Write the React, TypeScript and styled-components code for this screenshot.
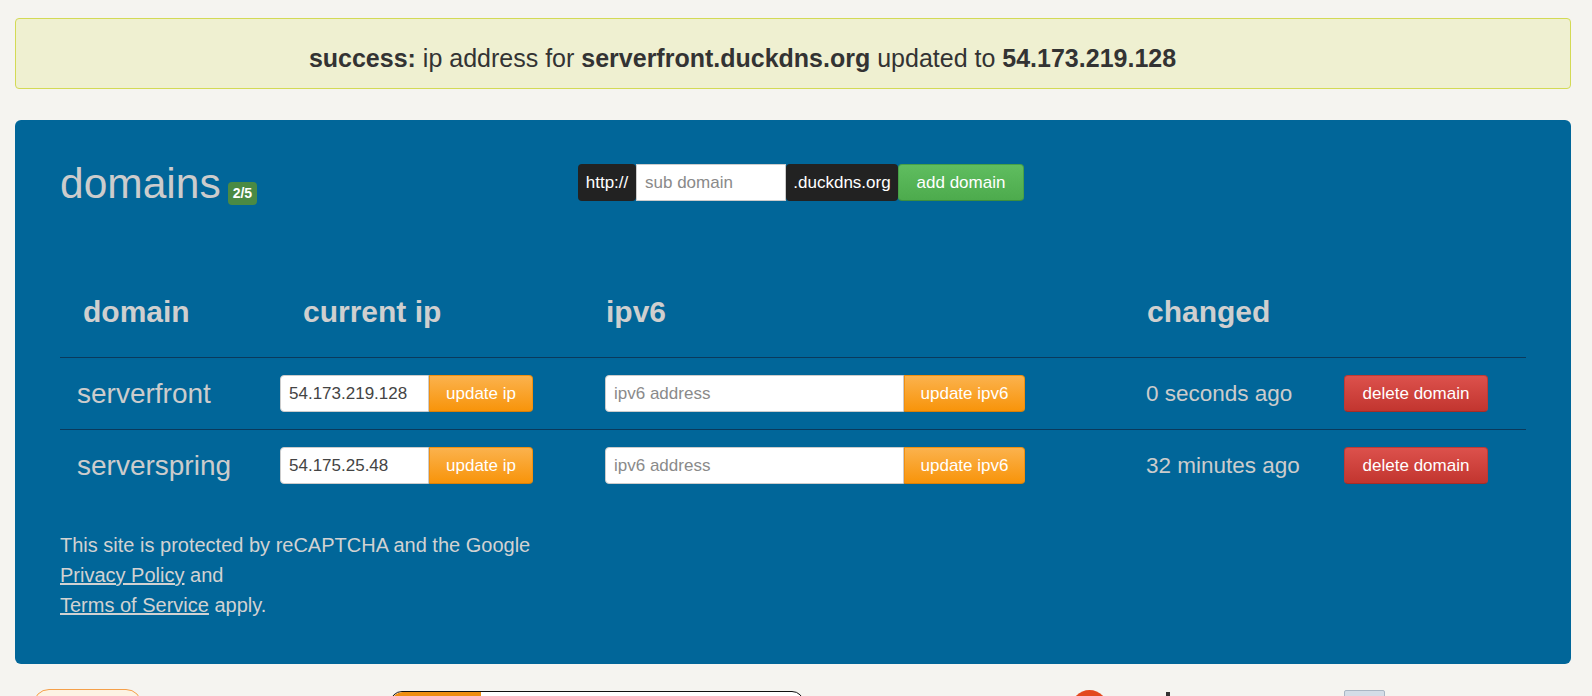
import styled, { createGlobalStyle, css } from "styled-components";

const GlobalStyle = createGlobalStyle`
  html, body {
    margin: 0;
    overflow: hidden;
  }
  body {
    background: #f5f4f0;
    font-family: "Liberation Sans", Arial, Helvetica, sans-serif;
  }
`;

const Page = styled.div`
  padding: 18px 21px 0 15px;
`;

const Alert = styled.div`
  background: #eff0d1;
  border: 1px solid #d3da55;
  border-radius: 4px;
  color: #333;
  font-size: 25px;
  line-height: 30px;
  text-align: center;
  padding: 24px 101px 15px 0;

  b {
    font-weight: bold;
  }
`;

const Panel = styled.div`
  margin-top: 31px;
  background: #016699;
  border-radius: 6px;
  padding: 40px 45px 44px;
  color: #cccccc;
`;

const PanelHead = styled.div`
  display: grid;
  grid-template-columns: 518px auto;
  align-items: start;
`;

const Title = styled.h1`
  margin: 0;
  font-size: 42.5px;
  font-weight: normal;
  line-height: 48px;
  color: #cccccc;
`;

const Badge = styled.span`
  display: inline-block;
  margin-left: 7px;
  padding: 3px 5px 4px;
  font-size: 14px;
  line-height: 16px;
  font-weight: bold;
  color: #fff;
  background: #4a8a44;
  border-radius: 4px;
  vertical-align: baseline;
`;

const AddGroup = styled.div`
  display: flex;
  margin-top: 4px;
  height: 37px;
`;

const Addon = styled.span<{ $w: number }>`
  display: flex;
  align-items: center;
  justify-content: center;
  width: ${(p) => p.$w}px;
  background: #222;
  color: #fff;
  font-size: 17px;
  border-radius: 4px;
`;

const TextBox = styled.input<{ $w: number; $side?: "left" | "none" }>`
  box-sizing: border-box;
  width: ${(p) => p.$w}px;
  height: 100%;
  margin: 0;
  border: 1px solid #cccccc;
  background: #fff;
  font-family: inherit;
  font-size: 17px;
  color: #444;
  padding: 0 8px;
  outline: none;
  border-radius: ${(p) => (p.$side === "left" ? "4px 0 0 4px" : "0")};

  &::placeholder {
    color: #8a8a8a;
  }
`;

type Tone = "green" | "orange" | "red";

const tones: Record<Tone, ReturnType<typeof css>> = {
  green: css`
    background: linear-gradient(#5fbd5f, #4dab4d);
    border-color: #47a047 #47a047 #3d8f3d;
  `,
  orange: css`
    background: linear-gradient(#fbb24d, #f8940a);
    border-color: #f19010 #f19010 #d97f06;
  `,
  red: css`
    background: linear-gradient(#dc514c, #c2352f);
    border-color: #bf3a34 #bf3a34 #a52c27;
  `,
};

const Button = styled.button<{ $tone: Tone; $w: number; $joined?: boolean }>`
  box-sizing: border-box;
  width: ${(p) => p.$w}px;
  height: 100%;
  margin: 0;
  border: 1px solid;
  font-family: inherit;
  font-size: 17px;
  color: #fff;
  cursor: pointer;
  padding: 0;
  border-radius: ${(p) => (p.$joined ? "0 4px 4px 0" : "4px")};
  ${(p) => tones[p.$tone]}
`;

const cols = css`
  display: grid;
  grid-template-columns: 220px 325px 541px 198px 1fr;
`;

const Table = styled.div`
  margin-top: 87px;
  display: flex;
  flex-direction: column;
`;

const HeadRow = styled.div`
  ${cols}
  border-bottom: 1px solid #0a3a5c;
`;

const HeadCell = styled.div<{ $indent: number }>`
  padding: 0 0 28px ${(p) => p.$indent}px;
  font-size: 30px;
  line-height: 34px;
  font-weight: bold;
  color: #cfcfcf;
`;

const Row = styled.div<{ $last?: boolean }>`
  ${cols}
  height: 71px;
  align-items: center;
  border-bottom: ${(p) => (p.$last ? "none" : "1px solid #0a3a5c")};
`;

const DomainName = styled.div`
  padding-left: 17px;
  font-size: 28px;
  color: #cccccc;
`;

const Changed = styled.div`
  font-size: 22.5px;
  color: #cccccc;
`;

const Field = styled.div`
  display: flex;
  height: 37px;
`;

const Note = styled.p`
  margin: 29px 0 0;
  font-size: 20px;
  line-height: 30px;
  color: #d2d2d2;

  a {
    color: inherit;
  }
`;

const Strip = styled.div`
  display: flex;
  align-items: flex-start;
  margin-top: 25px;
  height: 40px;
`;

const PromoCard = styled.div`
  margin-left: 18px;
  width: 107px;
  height: 40px;
  border: 1px solid #f5a04a;
  background: #fdf3e3;
  border-radius: 16px;
`;

const PromoPill = styled.div`
  margin: 2px 0 0 248px;
  width: 412px;
  height: 40px;
  border: 1px solid #111;
  border-radius: 12px;
  overflow: hidden;
  background: #fff;

  span {
    display: block;
    width: 90px;
    height: 100%;
    background: #ef8e10;
    border-radius: 12px 0 0 12px;
  }
`;

const Dot = styled.div`
  margin: 1px 0 0 267px;
  width: 37px;
  height: 37px;
  border-radius: 50%;
  background: #e3491e;
`;

const LogoStroke = styled.div`
  margin: 3px 0 0 58px;
  width: 4px;
  height: 30px;
  background: #333;
`;

const Tile = styled.div`
  margin: 1px 0 0 174px;
  width: 39px;
  height: 40px;
  border: 1px solid #a9b6c4;
  background: #d4dde7;
  border-radius: 2px;
`;

const domains = [
  { name: "serverfront", ip: "54.173.219.128", changed: "0 seconds ago" },
  { name: "serverspring", ip: "54.175.25.48", changed: "32 minutes ago" },
];

export default function App() {
  return (
    <>
      <GlobalStyle />
      <Page>
        <Alert>
          <b>success:</b> ip address for <b>serverfront.duckdns.org</b> updated to{" "}
          <b>54.173.219.128</b>
        </Alert>

        <Panel>
          <PanelHead>
            <Title>
              domains<Badge>2/5</Badge>
            </Title>
            <AddGroup>
              <Addon $w={58}>http://</Addon>
              <TextBox $w={150} placeholder="sub domain" />
              <Addon $w={112}>.duckdns.org</Addon>
              <Button $tone="green" $w={126}>
                add domain
              </Button>
            </AddGroup>
          </PanelHead>

          <Table>
            <HeadRow>
              <HeadCell $indent={23}>domain</HeadCell>
              <HeadCell $indent={23}>current ip</HeadCell>
              <HeadCell $indent={1}>ipv6</HeadCell>
              <HeadCell $indent={1}>changed</HeadCell>
              <HeadCell $indent={0} />
            </HeadRow>
            {domains.map((d, i) => (
              <Row key={d.name} $last={i === domains.length - 1}>
                <DomainName>{d.name}</DomainName>
                <Field>
                  <TextBox $w={149} $side="left" defaultValue={d.ip} />
                  <Button $tone="orange" $w={104} $joined>
                    update ip
                  </Button>
                </Field>
                <Field>
                  <TextBox $w={299} $side="left" placeholder="ipv6 address" />
                  <Button $tone="orange" $w={121} $joined>
                    update ipv6
                  </Button>
                </Field>
                <Changed>{d.changed}</Changed>
                <Field>
                  <Button $tone="red" $w={144}>
                    delete domain
                  </Button>
                </Field>
              </Row>
            ))}
          </Table>

          <Note>
            This site is protected by reCAPTCHA and the Google
            <br />
            <a href="#">Privacy Policy</a> and
            <br />
            <a href="#">Terms of Service</a> apply.
          </Note>
        </Panel>

        <Strip>
          <PromoCard />
          <PromoPill>
            <span />
          </PromoPill>
          <Dot />
          <LogoStroke />
          <Tile />
        </Strip>
      </Page>
    </>
  );
}
